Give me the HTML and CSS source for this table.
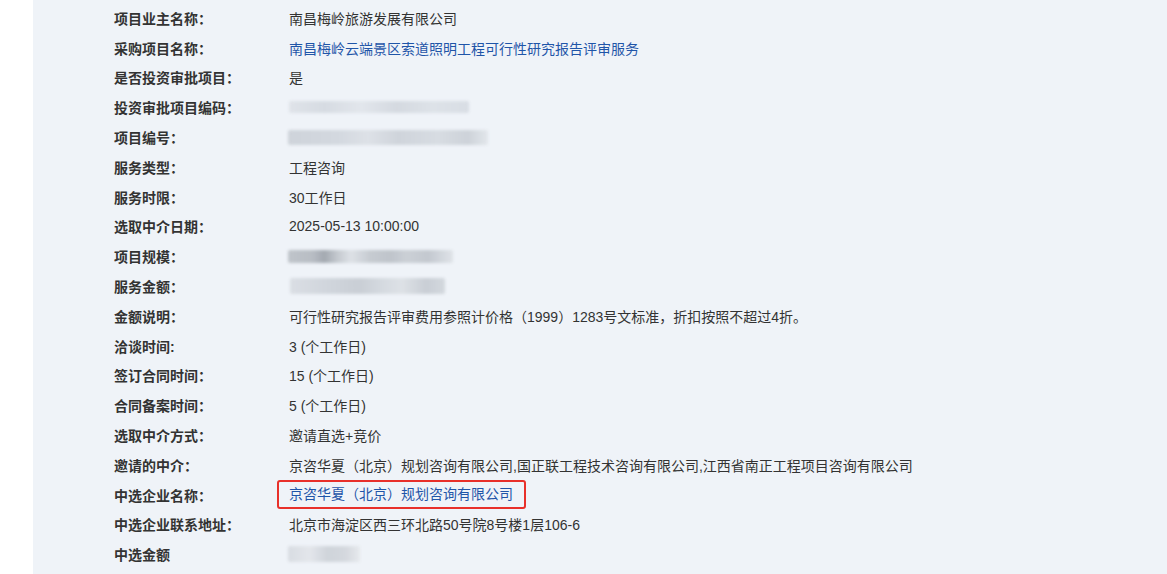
FILE: index.html
```html
<!DOCTYPE html>
<html lang="zh-CN">
<head>
<meta charset="utf-8">
<link rel="stylesheet" href="styles.css">
</head>
<body>
<div class="page">
  <div class="list">
    <div class="row"><div class="label">项目业主名称：</div><div class="value">南昌梅岭旅游发展有限公司</div></div>
    <div class="row"><div class="label">采购项目名称：</div><div class="value"><a class="link">南昌梅岭云端景区索道照明工程可行性研究报告评审服务</a></div></div>
    <div class="row"><div class="label">是否投资审批项目：</div><div class="value">是</div></div>
    <div class="row"><div class="label">投资审批项目编码：</div><div class="value"><span class="blur b1"></span></div></div>
    <div class="row"><div class="label">项目编号：</div><div class="value"><span class="blur b2"></span></div></div>
    <div class="row"><div class="label">服务类型：</div><div class="value">工程咨询</div></div>
    <div class="row"><div class="label">服务时限：</div><div class="value">30工作日</div></div>
    <div class="row"><div class="label">选取中介日期：</div><div class="value">2025-05-13 10:00:00</div></div>
    <div class="row"><div class="label">项目规模：</div><div class="value"><span class="blur b3"></span></div></div>
    <div class="row"><div class="label">服务金额：</div><div class="value"><span class="blur b4"></span></div></div>
    <div class="row"><div class="label">金额说明：</div><div class="value">可行性研究报告评审费用参照计价格（1999）1283号文标准，折扣按照不超过4折。</div></div>
    <div class="row"><div class="label">洽谈时间:</div><div class="value">3 (个工作日)</div></div>
    <div class="row"><div class="label">签订合同时间：</div><div class="value">15 (个工作日)</div></div>
    <div class="row"><div class="label">合同备案时间：</div><div class="value">5 (个工作日)</div></div>
    <div class="row"><div class="label">选取中介方式：</div><div class="value">邀请直选+竞价</div></div>
    <div class="row"><div class="label">邀请的中介：</div><div class="value">京咨华夏（北京）规划咨询有限公司,国正联工程技术咨询有限公司,江西省南正工程项目咨询有限公司</div></div>
    <div class="row"><div class="label">中选企业名称：</div><div class="value"><a class="link boxed">京咨华夏（北京）规划咨询有限公司</a></div></div>
    <div class="row"><div class="label">中选企业联系地址：</div><div class="value">北京市海淀区西三环北路50号院8号楼1层106-6</div></div>
    <div class="row"><div class="label">中选金额</div><div class="value"><span class="blur b5"></span></div></div>
  </div>
</div>
</body>
</html>
```

FILE: styles.css
```css
html, body {
  margin: 0;
  padding: 0;
  background: #ffffff;
  height: 100%;
}
body {
  font-family: "Liberation Sans", "Noto Sans CJK SC", sans-serif;
  font-size: 14px;
  color: #333333;
  overflow: hidden;
}
.page {
  margin-left: 33px;
  background: #eff3f8;
  min-height: 574px;
}
.list {
  padding: 3px 0 0 81px;
}
.row {
  display: flex;
  align-items: center;
  height: 29.8px;
}
.label {
  width: 175px;
  flex: none;
  font-weight: bold;
  color: #333333;
}
.value {
  color: #333333;
  white-space: nowrap;
}
.link {
  color: #1f55a8;
  text-decoration: none;
}
.boxed {
  display: inline-block;
  border: 2px solid #e8302a;
  border-radius: 3px;
  line-height: 25px;
  padding: 0 11px 0 10px;
  margin-left: -12px;
}
.blur {
  display: block;
  filter: blur(1.5px);
  border-radius: 2px;
}
.b1 {
  width: 180px;
  height: 12px;
  background: linear-gradient(90deg, #dfe3e9 0%, #d6dbe2 20%, #e2e6ec 40%, #d4d9e0 60%, #dde2e8 80%, #d8dde4 100%);
}
.b2 {
  width: 200px;
  height: 15px;
  margin-left: -1px;
  background: linear-gradient(90deg, #ced3da 0%, #d3d8df 25%, #dde1e7 40%, #cfd4db 55%, #d7dce2 75%, #cdd2d9 90%, #e2e6eb 100%);
}
.b3 {
  width: 165px;
  height: 13px;
  margin-left: -1px;
  background: linear-gradient(90deg, #bfc4ca 0%, #b8bdc4 15%, #a3a9b1 22%, #c4c9cf 30%, #dde1e6 38%, #c6cbd1 50%, #bfc4cb 62%, #cbd0d6 72%, #c3c8cf 85%, #dfe3e8 100%);
}
.b4 {
  width: 155px;
  height: 16px;
  margin-left: 1px;
  background: linear-gradient(90deg, #dadee4 0%, #d0d5dc 25%, #c9ced5 45%, #d5dae0 60%, #dde1e6 72%, #c9ced5 88%, #d3d8de 100%);
}
.b5 {
  width: 72px;
  height: 16px;
  margin-left: -1px;
  background: linear-gradient(90deg, #d8dce2 0%, #e3e6eb 30%, #cfd4da 55%, #d4d8de 80%, #e6e9ed 100%);
}
```
